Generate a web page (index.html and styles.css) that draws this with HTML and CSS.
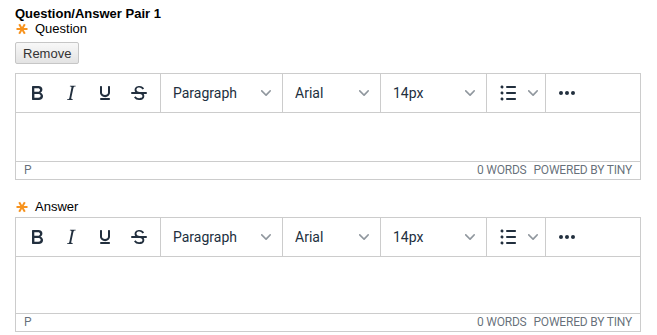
FILE: index.html
```html
<!DOCTYPE html>
<html>
<head>
<meta charset="utf-8">
<link rel="stylesheet" href="styles.css">
</head>
<body>
<div class="page">
  <div class="pair-title">Question/Answer Pair 1</div>
  <div class="field-label"><svg class="req" viewBox="0 0 12 12"><path d="M0.5 6H11.5M3.2 1.3L8.8 10.7M8.8 1.3L3.2 10.7"/></svg>Question</div>
  <button class="btn-remove" type="button">Remove</button>

  <div class="editor">
    <div class="toolbar">
      <div class="tb-group">
        <span class="tbtn"><svg viewBox="0 0 24 24"><path d="M7.8 19c-.3 0-.5 0-.6-.2l-.2-.5V5.7c0-.2 0-.4.2-.5l.6-.2h5c1.5 0 2.7.3 3.5 1 .7.6 1.1 1.4 1.1 2.5a3 3 0 01-.6 1.9c-.4.6-1 1-1.6 1.2.4.1.9.3 1.3.6s.8.7 1 1.2c.4.4.5 1 .5 1.6 0 1.300-.4 2.3-1.3 3-.8.7-2.1 1-3.8 1H7.8zm5-8.3c.6 0 1.2-.1 1.6-.5.4-.3.6-.7.6-1.3 0-1.100-.8-1.700-2.3-1.700H9.3v3.5h3.4zm.5 6c.7 0 1.3-.1 1.7-.4.4-.4.6-.9.6-1.500s-.2-1-.7-1.400c-.4-.3-1-.4-2-.4H9.4v3.8h4z" fill-rule="evenodd"/></svg></span>
        <span class="tbtn"><svg viewBox="0 0 24 24"><path d="M16.7 4.7l-.1.9h-.3c-.6 0-1 0-1.4.3-.3.3-.4.6-.5 1.1l-2.1 9.8v.6c0 .5.4.8 1.4.8h.2l-.2.8H8l.2-.8h.2c1.1 0 1.8-.5 2-1.5l2-9.8.1-.5c0-.6-.4-.8-1.400-.8h-.3l.2-.9h5.8z" fill-rule="evenodd"/></svg></span>
        <span class="tbtn"><svg viewBox="0 0 24 24"><path d="M16 5c.6 0 1 .4 1 1v5.5a4 4 0 01-.4 1.8l-1 1.4a5.3 5.3 0 01-5.5 1 5 5 0 01-1.6-1c-.5-.4-.8-.9-1.1-1.4a4 4 0 01-.4-1.8V6c0-.6.4-1 1-1s1 .4 1 1v5.5c0 .3 0 .6.2 1l.6.7a3.300 3.300 0 002.2.8 3.400 3.400 0 002.2-.8c.3-.2.4-.5.6-.8l.2-.9V6c0-.6.4-1 1-1zM8 17h8c.6 0 1 .4 1 1s-.4 1-1 1H8a1 1 0 010-2z" fill-rule="evenodd"/></svg></span>
        <span class="tbtn"><svg viewBox="0 0 24 24"><path d="M15.6 8.5c-.5-.7-1-1.1-1.3-1.3-.6-.4-1.3-.6-2-.6-2.7 0-2.8 1.7-2.8 2.1 0 1.6 1.8 2 3.2 2.3 4.4.9 4.6 2.8 4.6 3.9 0 1.4-.7 4.1-5 4.1A6.2 6.2 0 017 16.4l1.5-1.1c.4.6 1.6 2 3.7 2 1.6 0 2.5-.4 3-1.2.4-.8.3-2-.8-2.6-.7-.4-1.6-.7-2.9-1-1-.2-3.9-.8-3.9-3.600C7.6 6 10.3 5 12.4 5c2.9 0 4.2 1.6 4.7 2.4l-1.500 1.100z"/><path d="M5 11h14a1 1 0 010 2H5a1 1 0 010-2z"/></svg></span>
      </div>
      <div class="tb-group">
        <span class="tbtn select"><span class="sel-label w-para">Paragraph</span><span class="chev"><svg viewBox="0 0 10 10"><path d="M8.7 2.2c.3-.3.8-.3 1 0 .4.4.4.9 0 1.2L5.7 7.8c-.3.3-.9.3-1.2 0L.2 3.4a.8.8 0 010-1.2c.3-.3.8-.3 1.1 0L5 6l3.7-3.8z"/></svg></span></span>
      </div>
      <div class="tb-group">
        <span class="tbtn select"><span class="sel-label w-font">Arial</span><span class="chev"><svg viewBox="0 0 10 10"><path d="M8.7 2.2c.3-.3.8-.3 1 0 .4.4.4.9 0 1.2L5.7 7.8c-.3.3-.9.3-1.2 0L.2 3.4a.8.8 0 010-1.2c.3-.3.8-.3 1.1 0L5 6l3.7-3.8z"/></svg></span></span>
      </div>
      <div class="tb-group">
        <span class="tbtn select"><span class="sel-label w-size">14px</span><span class="chev"><svg viewBox="0 0 10 10"><path d="M8.7 2.2c.3-.3.8-.3 1 0 .4.4.4.9 0 1.2L5.7 7.8c-.3.3-.9.3-1.2 0L.2 3.4a.8.8 0 010-1.2c.3-.3.8-.3 1.1 0L5 6l3.7-3.8z"/></svg></span></span>
      </div>
      <div class="tb-group">
        <span class="tbtn"><svg viewBox="0 0 24 24"><path d="M11 5h8c.6 0 1 .4 1 1s-.4 1-1 1h-8a1 1 0 010-2zm0 6h8c.6 0 1 .4 1 1s-.4 1-1 1h-8a1 1 0 010-2zm0 6h8c.6 0 1 .4 1 1s-.4 1-1 1h-8a1 1 0 010-2zM4.5 6c0-.4.1-.8.4-1 .3-.4.7-.5 1.1-.5.4 0 .8.1 1 .4.4.3.5.7.5 1.1 0 .4-.1.8-.4 1-.3.4-.7.5-1.1.5-.4 0-.8-.1-1-.4-.4-.3-.5-.7-.5-1.1zm0 6c0-.4.1-.8.4-1 .3-.4.7-.5 1.1-.5.4 0 .8.1 1 .4.4.3.5.7.5 1.1 0 .4-.1.8-.4 1-.3.4-.7.5-1.1.5-.4 0-.8-.1-1-.4-.4-.3-.5-.7-.5-1.1zm0 6c0-.4.1-.8.4-1 .3-.4.7-.5 1.1-.5.4 0 .8.1 1 .4.4.3.5.7.5 1.1 0 .4-.1.8-.4 1-.3.4-.7.5-1.1.5-.4 0-.8-.1-1-.4-.4-.3-.5-.7-.5-1.1z" fill-rule="evenodd"/></svg></span><span class="chev split"><svg viewBox="0 0 10 10"><path d="M8.7 2.2c.3-.3.8-.3 1 0 .4.4.4.9 0 1.2L5.7 7.8c-.3.3-.9.3-1.2 0L.2 3.4a.8.8 0 010-1.2c.3-.3.8-.3 1.1 0L5 6l3.7-3.8z"/></svg></span>
      </div>
      <div class="tb-group last">
        <span class="tbtn"><svg viewBox="0 0 24 24"><path d="M6 10a2 2 0 00-2 2c0 1.1.9 2 2 2a2 2 0 002-2 2 2 0 00-2-2zm12 0a2 2 0 00-2 2c0 1.1.9 2 2 2a2 2 0 002-2 2 2 0 00-2-2zm-6 0a2 2 0 00-2 2c0 1.1.9 2 2 2a2 2 0 002-2 2 2 0 00-2-2z"/></svg></span>
      </div>
    </div>
    <div class="content"></div>
    <div class="statusbar"><span class="path">p</span><span class="status-right"><span>0 words</span><span>Powered by Tiny</span></span></div>
  </div>

  <div class="field-label answer"><svg class="req" viewBox="0 0 12 12"><path d="M0.5 6H11.5M3.2 1.3L8.8 10.7M8.8 1.3L3.2 10.7"/></svg>Answer</div>

  <div class="editor">
    <div class="toolbar">
      <div class="tb-group">
        <span class="tbtn"><svg viewBox="0 0 24 24"><path d="M7.8 19c-.3 0-.5 0-.6-.2l-.2-.5V5.7c0-.2 0-.4.2-.5l.6-.2h5c1.5 0 2.7.3 3.5 1 .7.6 1.1 1.4 1.1 2.5a3 3 0 01-.6 1.9c-.4.6-1 1-1.6 1.2.4.1.9.3 1.3.6s.8.7 1 1.2c.4.4.5 1 .5 1.6 0 1.300-.4 2.3-1.3 3-.8.7-2.1 1-3.8 1H7.8zm5-8.3c.6 0 1.2-.1 1.6-.5.4-.3.6-.7.6-1.3 0-1.100-.8-1.700-2.3-1.700H9.3v3.5h3.4zm.5 6c.7 0 1.3-.1 1.7-.4.4-.4.6-.9.6-1.500s-.2-1-.7-1.400c-.4-.3-1-.4-2-.4H9.4v3.8h4z" fill-rule="evenodd"/></svg></span>
        <span class="tbtn"><svg viewBox="0 0 24 24"><path d="M16.7 4.7l-.1.9h-.3c-.6 0-1 0-1.4.3-.3.3-.4.6-.5 1.1l-2.1 9.8v.6c0 .5.4.8 1.4.8h.2l-.2.8H8l.2-.8h.2c1.1 0 1.8-.5 2-1.5l2-9.8.1-.5c0-.6-.4-.8-1.400-.8h-.3l.2-.9h5.8z" fill-rule="evenodd"/></svg></span>
        <span class="tbtn"><svg viewBox="0 0 24 24"><path d="M16 5c.6 0 1 .4 1 1v5.5a4 4 0 01-.4 1.8l-1 1.4a5.3 5.3 0 01-5.5 1 5 5 0 01-1.6-1c-.5-.4-.8-.9-1.1-1.4a4 4 0 01-.4-1.8V6c0-.6.4-1 1-1s1 .4 1 1v5.5c0 .3 0 .6.2 1l.6.7a3.300 3.300 0 002.2.8 3.400 3.400 0 002.2-.8c.3-.2.4-.5.6-.8l.2-.9V6c0-.6.4-1 1-1zM8 17h8c.6 0 1 .4 1 1s-.4 1-1 1H8a1 1 0 010-2z" fill-rule="evenodd"/></svg></span>
        <span class="tbtn"><svg viewBox="0 0 24 24"><path d="M15.6 8.5c-.5-.7-1-1.1-1.3-1.3-.6-.4-1.3-.6-2-.6-2.7 0-2.8 1.7-2.8 2.1 0 1.6 1.8 2 3.2 2.3 4.4.9 4.6 2.8 4.6 3.9 0 1.4-.7 4.1-5 4.1A6.2 6.2 0 017 16.4l1.5-1.1c.4.6 1.6 2 3.7 2 1.6 0 2.5-.4 3-1.2.4-.8.3-2-.8-2.6-.7-.4-1.6-.7-2.9-1-1-.2-3.9-.8-3.9-3.600C7.6 6 10.3 5 12.4 5c2.9 0 4.2 1.6 4.7 2.4l-1.500 1.100z"/><path d="M5 11h14a1 1 0 010 2H5a1 1 0 010-2z"/></svg></span>
      </div>
      <div class="tb-group">
        <span class="tbtn select"><span class="sel-label w-para">Paragraph</span><span class="chev"><svg viewBox="0 0 10 10"><path d="M8.7 2.2c.3-.3.8-.3 1 0 .4.4.4.9 0 1.2L5.7 7.8c-.3.3-.9.3-1.2 0L.2 3.4a.8.8 0 010-1.2c.3-.3.8-.3 1.1 0L5 6l3.7-3.8z"/></svg></span></span>
      </div>
      <div class="tb-group">
        <span class="tbtn select"><span class="sel-label w-font">Arial</span><span class="chev"><svg viewBox="0 0 10 10"><path d="M8.7 2.2c.3-.3.8-.3 1 0 .4.4.4.9 0 1.2L5.7 7.8c-.3.3-.9.3-1.2 0L.2 3.4a.8.8 0 010-1.2c.3-.3.8-.3 1.1 0L5 6l3.7-3.8z"/></svg></span></span>
      </div>
      <div class="tb-group">
        <span class="tbtn select"><span class="sel-label w-size">14px</span><span class="chev"><svg viewBox="0 0 10 10"><path d="M8.7 2.2c.3-.3.8-.3 1 0 .4.4.4.9 0 1.2L5.7 7.8c-.3.3-.9.3-1.2 0L.2 3.4a.8.8 0 010-1.2c.3-.3.8-.3 1.1 0L5 6l3.7-3.8z"/></svg></span></span>
      </div>
      <div class="tb-group">
        <span class="tbtn"><svg viewBox="0 0 24 24"><path d="M11 5h8c.6 0 1 .4 1 1s-.4 1-1 1h-8a1 1 0 010-2zm0 6h8c.6 0 1 .4 1 1s-.4 1-1 1h-8a1 1 0 010-2zm0 6h8c.6 0 1 .4 1 1s-.4 1-1 1h-8a1 1 0 010-2zM4.5 6c0-.4.1-.8.4-1 .3-.4.7-.5 1.1-.5.4 0 .8.1 1 .4.4.3.5.7.5 1.1 0 .4-.1.8-.4 1-.3.4-.7.5-1.1.5-.4 0-.8-.1-1-.4-.4-.3-.5-.7-.5-1.1zm0 6c0-.4.1-.8.4-1 .3-.4.7-.5 1.1-.5.4 0 .8.1 1 .4.4.3.5.7.5 1.1 0 .4-.1.8-.4 1-.3.4-.7.5-1.1.5-.4 0-.8-.1-1-.4-.4-.3-.5-.7-.5-1.1zm0 6c0-.4.1-.8.4-1 .3-.4.7-.5 1.1-.5.4 0 .8.1 1 .4.4.3.5.7.5 1.1 0 .4-.1.8-.4 1-.3.4-.7.5-1.1.5-.4 0-.8-.1-1-.4-.4-.3-.5-.7-.5-1.1z" fill-rule="evenodd"/></svg></span><span class="chev split"><svg viewBox="0 0 10 10"><path d="M8.7 2.2c.3-.3.8-.3 1 0 .4.4.4.9 0 1.2L5.7 7.8c-.3.3-.9.3-1.2 0L.2 3.4a.8.8 0 010-1.2c.3-.3.8-.3 1.1 0L5 6l3.7-3.8z"/></svg></span>
      </div>
      <div class="tb-group last">
        <span class="tbtn"><svg viewBox="0 0 24 24"><path d="M6 10a2 2 0 00-2 2c0 1.1.9 2 2 2a2 2 0 002-2 2 2 0 00-2-2zm12 0a2 2 0 00-2 2c0 1.1.9 2 2 2a2 2 0 002-2 2 2 0 00-2-2zm-6 0a2 2 0 00-2 2c0 1.1.9 2 2 2a2 2 0 002-2 2 2 0 00-2-2z"/></svg></span>
      </div>
    </div>
    <div class="content tall"></div>
    <div class="statusbar"><span class="path">p</span><span class="status-right"><span>0 words</span><span>Powered by Tiny</span></span></div>
  </div>
</div>
</body>
</html>
```

FILE: styles.css
```css
html, body {
  margin: 0;
  padding: 0;
  background: #fff;
}

.page {
  padding: 6px 16px 0 15px;
  font-family: "Liberation Sans", Arial, sans-serif;
  font-size: 13px;
  line-height: 15px;
  color: #000;
}

.pair-title {
  font-weight: bold;
}

.field-label {
  display: block;
}

.field-label.answer {
  margin-top: 19px;
}

.req {
  width: 12px;
  height: 12px;
  vertical-align: -2px;
  margin: 0 7px 0 1px;
  fill: none;
  stroke: #f7931e;
  stroke-width: 2;
  stroke-linecap: butt;
}

.btn-remove {
  display: block;
  margin-top: 6px;
  height: 22px;
  padding: 0 7px;
  font-family: "Liberation Sans", Arial, sans-serif;
  font-size: 13px;
  color: #333;
  background: linear-gradient(#f8f8f8, #e3e3e3);
  border: 1px solid #c6c6c6;
  border-radius: 2px;
}

.editor {
  margin-top: 9px;
  border: 1px solid #ccc;
  background: #fff;
  font-family: Roboto, "Noto Sans", sans-serif;
  color: #222f3e;
}

.field-label.answer + .editor {
  margin-top: 3px;
}

.toolbar {
  display: flex;
  height: 38px;
  border-bottom: 1px solid #ccc;
}

.tb-group {
  display: flex;
  align-items: center;
  padding: 0 4px;
  border-right: 1px solid #ccc;
}

.tb-group.last {
  border-right: 0;
  flex: 1;
}

.tbtn {
  display: flex;
  align-items: center;
  justify-content: center;
  width: 34px;
  height: 34px;
}

.tbtn svg {
  width: 24px;
  height: 24px;
  fill: #222f3e;
}

.tbtn.select {
  width: auto;
  padding: 0 4px;
  justify-content: flex-start;
}

.sel-label {
  margin: 0 4px;
  font-size: 14px;
  white-space: nowrap;
  overflow: hidden;
}

.w-para { width: 81px; }
.w-font { width: 57px; }
.w-size { width: 65px; }

.chev {
  display: flex;
  align-items: center;
  justify-content: center;
  width: 16px;
  height: 34px;
}

.chev svg {
  width: 10px;
  height: 10px;
  fill: rgba(34, 47, 62, 0.5);
}

.content {
  height: 48px;
}

.content.tall {
  height: 56px;
}

.statusbar {
  display: flex;
  justify-content: space-between;
  height: 17px;
  line-height: 17px;
  padding: 0 8px;
  border-top: 1px solid #ccc;
  font-size: 12px;
  letter-spacing: -0.2px;
  text-transform: uppercase;
  color: rgba(34, 47, 62, 0.7);
}

.status-right {
  display: flex;
  gap: 7px;
}
```
